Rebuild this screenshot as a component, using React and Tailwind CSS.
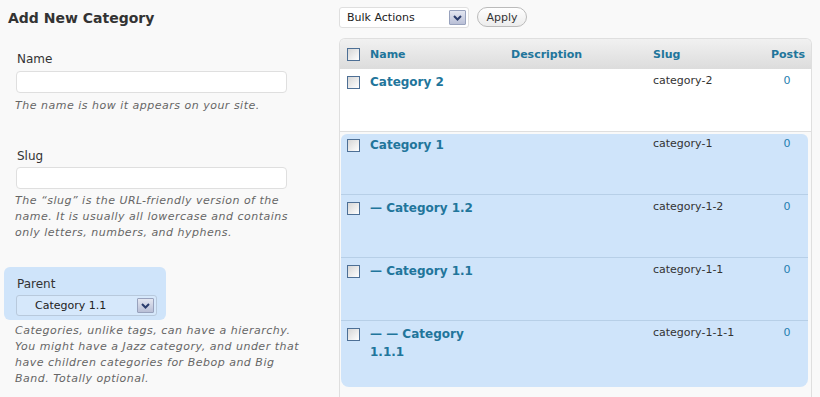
const rows = [
  { name: 'Category 1', slug: 'category-1', h: 'h-[61px]', pt: 'pt-[2px]', cb: 'mt-[5px]' },
  { name: '— Category 1.2', slug: 'category-1-2', h: 'h-[63px]', pt: 'pt-[4px]', cb: 'mt-[7px]' },
  { name: '— Category 1.1', slug: 'category-1-1', h: 'h-[63px]', pt: 'pt-[4px]', cb: 'mt-[7px]' },
  { name: '— — Category 1.1.1', slug: 'category-1-1-1', h: 'h-[66px]', pt: 'pt-[4px]', cb: 'mt-[7px]', last: true },
];

function Checkbox({ className = '' }) {
  return (
    <span
      className={`block w-[13px] h-[13px] border border-[#4d6f95] bg-gradient-to-br from-[#d6d6d6] to-white ${className}`}
    />
  );
}

function Arrow() {
  return (
    <span className="flex items-center justify-center w-[17px] h-[15px] border border-[#98a2bd] bg-gradient-to-b from-[#e4e7f1] to-[#b9bfd6] rounded-[1px]">
      <svg width="9" height="6" viewBox="0 0 9 6">
        <path d="M1 1 L4.5 4.5 L8 1" fill="none" stroke="#2b3d6d" strokeWidth="2" />
      </svg>
    </span>
  );
}

function Help({ children }) {
  return <p className="-ml-px text-[11px] leading-[16px] italic tracking-[0.5px] text-[#666]">{children}</p>;
}

export default function App() {
  return (
    <div className="w-[820px] h-[397px] overflow-hidden bg-[#f9f9f9] flex font-['DejaVu_Sans','Liberation_Sans',sans-serif] text-[#333]">
      {/* left: add form */}
      <div className="w-[339px] shrink-0">
        <h2 className="pl-[8px] pt-[10px] text-[14px] leading-[17px] font-bold text-[#333]">
          Add New Category
        </h2>

        <div className="pl-[16px]">
          <label className="block mt-[25px] ml-px text-[12px] leading-[15px]">Name</label>
          <div className="mt-[4px] w-[271px] h-[22px] bg-white border border-[#dfdfdf] rounded-[4px]" />
          <div className="mt-[5px]">
            <Help>The name is how it appears on your site.</Help>
          </div>

          <label className="block mt-[35px] ml-px text-[12px] leading-[15px]">Slug</label>
          <div className="mt-[3px] w-[271px] h-[22px] bg-white border border-[#dfdfdf] rounded-[4px]" />
          <div className="mt-[4px]">
            <Help>
              The “slug” is the URL-friendly version of the
              <br />
              name. It is usually all lowercase and contains
              <br />
              only letters, numbers, and hyphens.
            </Help>
          </div>
        </div>

        <div className="mt-[26px] ml-[4px] w-[162px] h-[53px] bg-[#cfe4fa] rounded-[6px] pt-[10px] pl-[12px]">
          <label className="block ml-px text-[12px] leading-[15px]">Parent</label>
          <div className="mt-[3px] w-[141px] h-[21px] border border-[#b8c9dc] bg-[#d6e8fb] rounded-[3px] flex items-center justify-between pl-[18px] pr-[2px]">
            <span className="text-[11px] leading-[15px] text-[#222]">Category 1.1</span>
            <Arrow />
          </div>
        </div>

        <div className="pl-[16px] mt-[3px]">
          <Help>
            Categories, unlike tags, can have a hierarchy.
            <br />
            You might have a Jazz category, and under that
            <br />
            have children categories for Bebop and Big
            <br />
            Band. Totally optional.
          </Help>
        </div>
      </div>

      {/* right: list table */}
      <div className="w-[473px] shrink-0">
        <div className="pt-[7px] flex items-start gap-[8px]">
          <div className="w-[130px] h-[21px] bg-white border border-[#dfdfdf] rounded-[3px] flex items-center justify-between pl-[7px] pr-[2px]">
            <span className="text-[11px] leading-[15px] text-[#222]">Bulk Actions</span>
            <Arrow />
          </div>
          <button className="w-[50px] h-[20px] rounded-full border border-[#bbb] bg-gradient-to-b from-white to-[#ececec] text-[11px] leading-[15px] text-[#333]">
            Apply
          </button>
        </div>

        <div className="mt-[10px] border-x border-t border-[#dfdfdf] rounded-t-[6px] h-[400px]">
          <div className="h-[30px] grid grid-cols-[30px_141px_142px_118px_40px] items-center rounded-t-[5px] bg-gradient-to-b from-[#f1f1f1] to-[#dcdcdc] text-[11px] leading-[15px] font-bold text-[#21759b]">
            <span className="pl-[7px]">
              <Checkbox />
            </span>
            <span>Name</span>
            <span>Description</span>
            <span>Slug</span>
            <span>Posts</span>
          </div>

          <div className="h-[63px] bg-white border-b border-[#dfdfdf] grid grid-cols-[30px_141px_142px_118px_40px] items-start">
            <span className="pl-[7px] mt-[7px]">
              <Checkbox />
            </span>
            <span className="pt-[4px] text-[12px] leading-[18px] font-bold text-[#21759b]">Category 2</span>
            <span />
            <span className="pt-[4px] text-[11px] leading-[15px] text-[#333]">category-2</span>
            <span className="pt-[4px] pr-[8px] text-center text-[11px] leading-[15px] text-[#1f7fb0]">0</span>
          </div>

          <div className="mt-[2px] ml-px mr-[3px] bg-[#cfe4fa] rounded-b-[8px] rounded-t-[6px]">
            {rows.map((r) => (
              <div
                key={r.slug}
                className={`${r.h} grid grid-cols-[29px_141px_142px_118px_36px] items-start ${r.last ? '' : 'border-b border-[#b7cfe7]'}`}
              >
                <span className={`pl-[6px] ${r.cb}`}>
                  <Checkbox />
                </span>
                <span className={`${r.pt} w-[128px] text-[12px] leading-[18px] font-bold text-[#21759b]`}>
                  {r.name}
                </span>
                <span />
                <span className={`${r.pt} text-[11px] leading-[15px] text-[#333]`}>{r.slug}</span>
                <span className={`${r.pt} pr-[4px] text-center text-[11px] leading-[15px] text-[#1f7fb0]`}>0</span>
              </div>
            ))}
          </div>
        </div>
      </div>
    </div>
  );
}
